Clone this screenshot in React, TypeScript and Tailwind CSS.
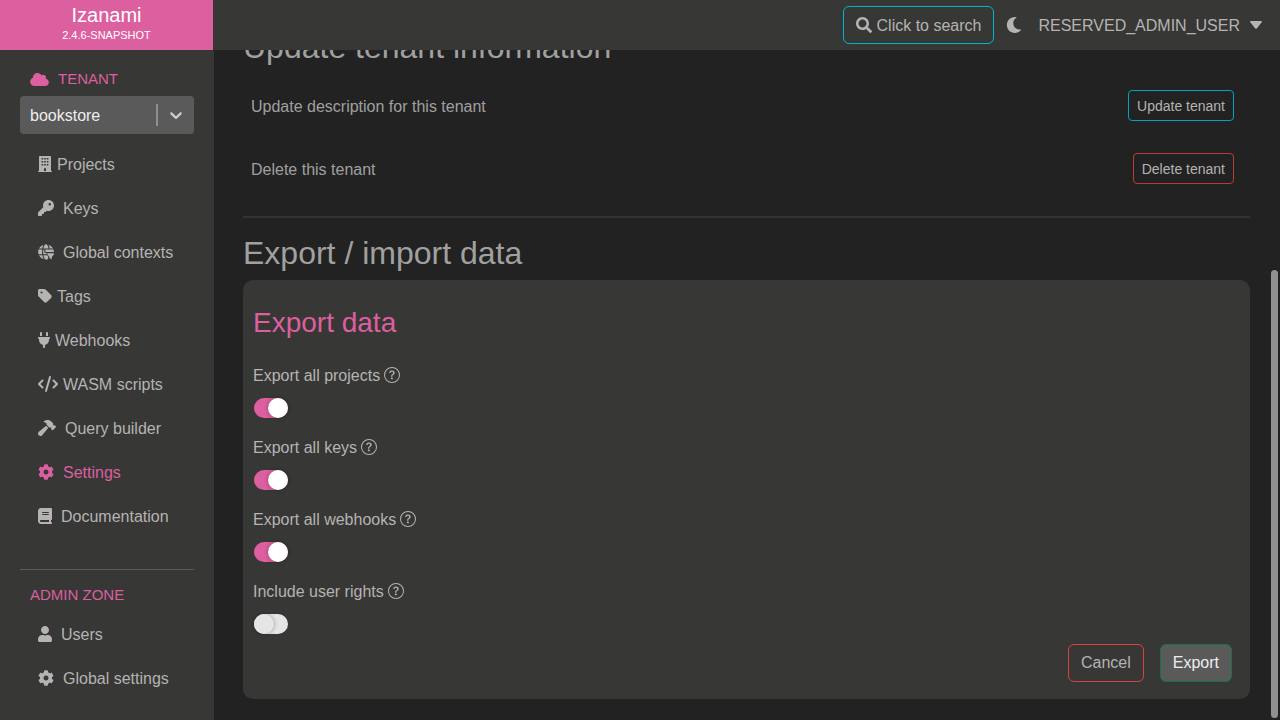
import type { ReactNode } from "react";
import { FaCloud, FaCog, FaMoon, FaSearch, FaUser } from "react-icons/fa";
import { FaBook, FaCode, FaHammer, FaKey, FaPlug, FaTag } from "react-icons/fa6";
import { BsQuestionCircle } from "react-icons/bs";

function BuildingIcon() {
  return (
    <svg viewBox="0 0 14 16" className="h-4 w-3.5" fill="currentColor" aria-hidden="true">
      <path
        fillRule="evenodd"
        d="M1.800 0h10.400q.8 0 .8.800V15h.6q.4 0 .4.400V16H0v-.6q0-.4.400-.4H1V.8Q1 0 1.800 0zM3.600 2v1.600h1.600V2zM6.200 2v1.600h1.600V2zM8.800 2v1.600h1.600V2zM3.600 5v1.600h1.600V5zM6.200 5v1.600h1.600V5zM8.800 5v1.600h1.600V5zM3.600 8v1.600h1.600V8zM6.200 8v1.600h1.600V8zM8.800 8v1.600h1.600V8zM6 12.300V15h2v-2.700z"
      />
    </svg>
  );
}

function GlobeFilterIcon() {
  return (
    <svg viewBox="0 0 16 16" className="h-4 w-4" fill="currentColor" aria-hidden="true">
      <path d="M5.400 4.500C5.800 2.100 6.800.300 8 .300s2.200 1.800 2.600 4.200zM4.300 4.500H.900A8 8 0 0 1 5.500.700C4.900 1.700 4.500 3 4.300 4.500zM11.700 4.500c-.2-1.500-.6-2.800-1.200-3.800A8 8 0 0 1 15.100 4.500zM.500 5.600h3.700a20 20 0 0 0 0 4.600H.500a8 8 0 0 1 0-4.600zM5.300 5.600h1v3.200h1.900l.5 1.400H5.300a18 18 0 0 1 0-4.600zM7.400 5.600h8.100l.3 1.500v1H7.400zM.900 11.300h3.500c.2 1.500.6 2.900 1.200 3.900a8 8 0 0 1-4.700-3.900zM5.400 11.300h3.700l1.100 1.300v2.100C9.600 15.400 8.900 15.700 8 15.700c-1.200 0-2.200-2-2.600-4.400z" />
      <path d="M9.300 9.200H16v1l-2.200 2.800v2.600l-2.300-1.500V13L9.300 10.200z" />
    </svg>
  );
}

type NavItem = { label: string; icon: ReactNode; wide?: boolean; active?: boolean };

const tenantItems: NavItem[] = [
  { label: "Projects", icon: <BuildingIcon /> },
  { label: "Keys", icon: <FaKey className="h-4 w-4" />, wide: true },
  { label: "Global contexts", icon: <GlobeFilterIcon />, wide: true },
  { label: "Tags", icon: <FaTag className="h-4 w-3.5" /> },
  { label: "Webhooks", icon: <FaPlug className="h-4 w-3" /> },
  { label: "WASM scripts", icon: <FaCode className="h-4 w-5" /> },
  { label: "Query builder", icon: <FaHammer className="h-4 w-[18px]" />, wide: true },
  { label: "Settings", icon: <FaCog className="h-4 w-4" />, wide: true, active: true },
  { label: "Documentation", icon: <FaBook className="h-4 w-3.5" />, wide: true },
];

const adminItems: NavItem[] = [
  { label: "Users", icon: <FaUser className="h-4 w-3.5" />, wide: true },
  { label: "Global settings", icon: <FaCog className="h-4 w-4" />, wide: true },
];

function NavList({ items }: { items: NavItem[] }) {
  return (
    <ul>
      {items.map((item) => (
        <li key={item.label}>
          <a
            href="#"
            className={`flex h-11 items-center pl-[18px] ${item.wide ? "gap-[9px]" : "gap-[5px]"} ${
              item.active ? "text-[#dc5f9f]" : "text-[#b5b3b3]"
            }`}
          >
            {item.icon}
            <span className="pt-0.5">{item.label}</span>
          </a>
        </li>
      ))}
    </ul>
  );
}

function Sidebar() {
  return (
    <nav className="w-[214px] shrink-0 bg-[#373735] px-5 pt-[18px]">
      <h2 className="flex h-[22px] items-center gap-[9px] pl-2.5 text-[15px] text-[#dc5f9f]">
        <FaCloud className="h-[15px] w-[19px]" />
        TENANT
      </h2>
      <div className="mt-1.5 grid w-[174px] grid-cols-1 items-center rounded bg-[#5a5a5a] text-white">
        <select
          aria-label="Tenant"
          className="col-start-1 row-start-1 h-[38px] w-full appearance-none rounded bg-transparent pt-0.5 pl-2.5 text-[#eeeeee]"
        >
          <option>bookstore</option>
        </select>
        <div className="pointer-events-none col-start-1 row-start-1 flex items-center gap-2 justify-self-end pr-2">
          <span className="h-[22px] w-0.5 bg-[#8f8f8f]" />
          <svg viewBox="0 0 20 20" className="h-5 w-5 text-[#cccccc]" fill="currentColor" aria-hidden="true">
            <path d="M4.516 7.548c0.436-0.446 1.043-0.481 1.576 0l3.908 3.747 3.908-3.747c0.533-0.481 1.141-0.446 1.574 0 0.436 0.445 0.408 1.197 0 1.615-0.406 0.418-4.695 4.502-4.695 4.502-0.217 0.223-0.502 0.335-0.787 0.335s-0.570-0.112-0.789-0.335c0 0-4.287-4.084-4.695-4.502s-0.436-1.170 0-1.615z" />
          </svg>
        </div>
      </div>
      <div className="mt-2">
        <NavList items={tenantItems} />
      </div>
      <hr className="mt-[31px] w-[174px] border-[#5a5a5a]" />
      <h2 className="mt-3.5 mb-1.5 pl-2.5 text-[15px] leading-[22px] text-[#dc5f9f]">ADMIN ZONE</h2>
      <NavList items={adminItems} />
    </nav>
  );
}

function Header() {
  return (
    <header className="flex h-[50px] shrink-0 bg-[#373735]">
      <a href="#" className="flex w-[213px] flex-col items-center bg-[#dc5f9f] pt-0.5 text-white">
        <span className="text-xl leading-[26px]">Izanami</span>
        <span className="text-[11px] leading-[14px]">2.4.6-SNAPSHOT</span>
      </a>
      <div className="flex flex-1 items-center justify-end pr-[18px] text-[#b5b3b3]">
        <button className="flex h-[38px] items-center gap-[5px] rounded-md border border-[#00b5cf] px-3">
          <FaSearch className="h-4 w-4" />
          <span className="pt-0.5">Click to search</span>
        </button>
        <button aria-label="Dark theme" className="ml-3">
          <FaMoon className="h-4 w-4" />
        </button>
        <button className="ml-4 flex items-center gap-2.5">
          <span className="pt-0.5">RESERVED_ADMIN_USER</span>
          <svg viewBox="0 0 12 8" className="h-2 w-3" fill="currentColor" aria-hidden="true">
            <path d="M.8 0h10.400q1.200.200.500 1.200L6.800 7.400q-.8.800-1.600 0L.300 1.200Q-.4.200.800 0z" />
          </svg>
        </button>
      </div>
    </header>
  );
}

const options = [
  { id: "projects", label: "Export all projects", on: true },
  { id: "keys", label: "Export all keys", on: true },
  { id: "webhooks", label: "Export all webhooks", on: true },
  { id: "rights", label: "Include user rights", on: false },
];

function ExportForm() {
  return (
    <form className="rounded-[10px] bg-[#373735] px-2.5 pt-6 pb-[17px] text-[#b5b3b3]">
      <h3 className="text-[28px] leading-[38px] text-[#dc5f9f]">Export data</h3>
      <div className="mt-5">
        {options.map((o) => (
          <div key={o.id} className="flex h-[72px] flex-col items-start">
            <label htmlFor={o.id} className="flex items-center gap-1">
              <span className="pt-0.5">{o.label}</span>
              <BsQuestionCircle className="h-4 w-4" />
            </label>
            <input
              id={o.id}
              type="checkbox"
              defaultChecked={o.on}
              className="mt-2.5 ml-px flex h-5 w-[34px] appearance-none rounded-full bg-[#e5e5e5] before:h-5 before:w-5 before:rounded-full before:bg-[#e5e5e5] before:shadow-[0_0_4px_rgba(0,0,0,0.35)] checked:justify-end checked:bg-[#dc5f9f] checked:before:bg-white"
            />
          </div>
        ))}
      </div>
      <div className="-mt-1.5 flex justify-end gap-4 pr-2">
        <button type="button" className="h-[38px] rounded-md border border-[#d5443f] px-3">
          Cancel
        </button>
        <button type="button" className="h-[38px] rounded-md border border-[#157347] bg-[#5a5a5a] px-3 text-[#eeeeee]">
          Export
        </button>
      </div>
    </form>
  );
}

export default function App() {
  return (
    <div className="flex h-screen flex-col overflow-hidden bg-[#222222] font-['Liberation_Sans',Arial,sans-serif] text-base text-[#a0a0a0]">
      <Header />
      <div className="flex min-h-0 flex-1">
        <Sidebar />
        <main className="min-w-0 flex-1 overflow-hidden pr-[21px] pl-[29px]">
          <section className="-mt-[22px]">
            <h2 className="text-[32px] leading-[38px]">Update tenant information</h2>
            <div className="mt-2 flex h-[63px] items-center justify-between pr-4 pl-2">
              <span className="pt-0.5">Update description for this tenant</span>
              <button className="h-[31px] rounded border border-[#00a5bd] px-2 text-sm text-[#b5b3b3]">Update tenant</button>
            </div>
            <div className="flex h-[63px] items-center justify-between pr-4 pl-2">
              <span className="pt-0.5">Delete this tenant</span>
              <button className="h-[31px] rounded border border-[#b83c38] px-2 text-sm text-[#b5b3b3]">Delete tenant</button>
            </div>
          </section>
          <hr className="mt-4 border-t-2 border-[#333333]" />
          <section className="mt-4">
            <h2 className="mb-2 text-[32px] leading-[38px]">Export / import data</h2>
            <ExportForm />
          </section>
        </main>
        <div className="flex w-[9px] flex-col justify-end pr-0.5 pb-0.5" aria-hidden="true">
          <div className="h-[67%] rounded-full bg-[#919191]" />
        </div>
      </div>
    </div>
  );
}
